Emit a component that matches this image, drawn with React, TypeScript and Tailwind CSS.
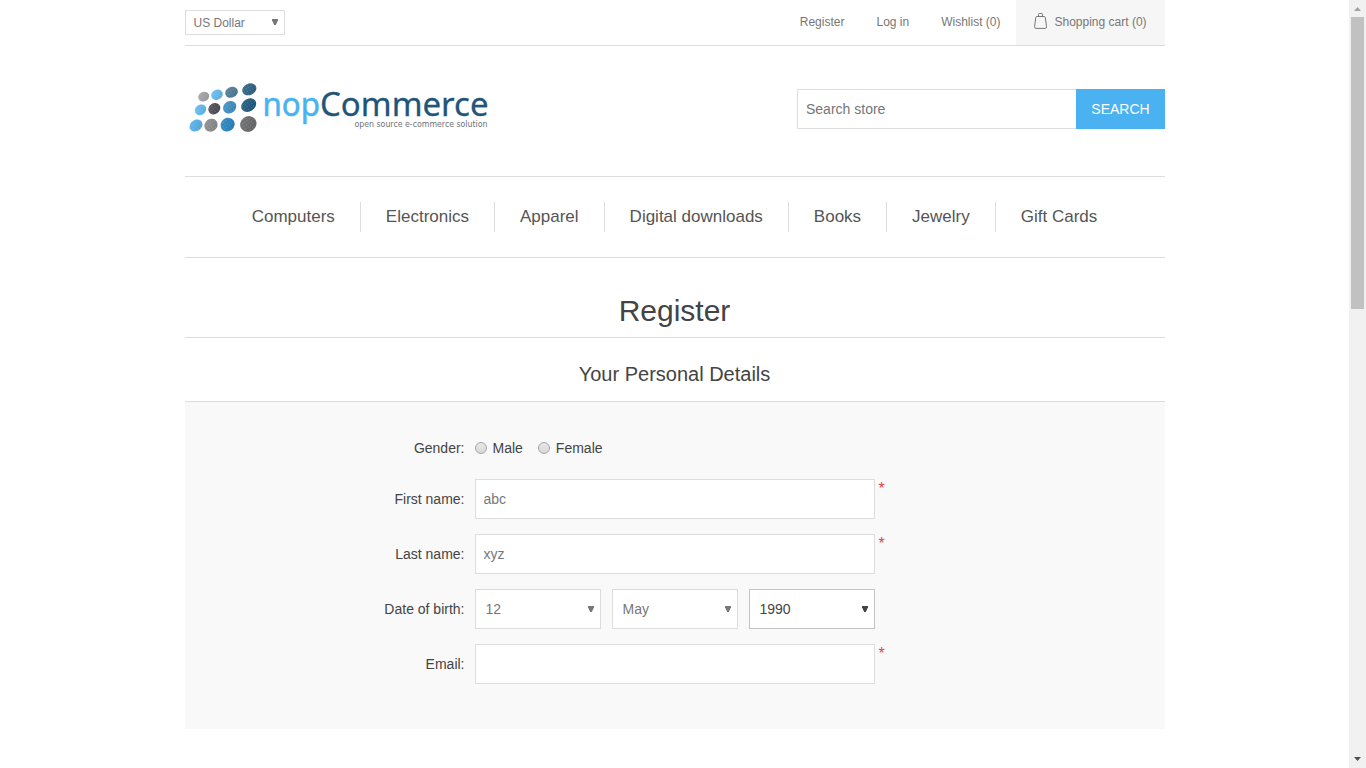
import type { ReactNode } from "react";

const dots: [number, number, number, number, string][] = [
  [18.7, 16.6, 5.6, 4.7, "#a3a3a8"],
  [32, 14.7, 6, 5, "#62bdf5"],
  [46.5, 12.3, 6.5, 5.3, "#4d7c99"],
  [64.3, 9.3, 7.3, 5.7, "#2b6285"],
  [15.5, 29.8, 6, 5.1, "#62bdf5"],
  [29.3, 28.7, 6.3, 5.4, "#4b4d53"],
  [44.7, 27.2, 7, 5.9, "#3a8fc7"],
  [63.7, 25.2, 8, 6.2, "#1b587f"],
  [11, 45.6, 6.9, 5.5, "#53b2f0"],
  [26, 45.2, 6.9, 6.2, "#8b8b8d"],
  [42.6, 44.7, 7.3, 6.6, "#2585c3"],
  [63.3, 44, 8.4, 7.7, "#68696b"],
];

function Logo() {
  return (
    <svg width="310" height="64" viewBox="0 0 310 64" className="overflow-visible" aria-label="nopCommerce">
      <defs>
        <linearGradient id="shine" x1="0" y1="0" x2="1" y2="1">
          <stop offset="0" stopColor="#fff" stopOpacity="0.1" />
          <stop offset="1" stopColor="#000" stopOpacity="0.12" />
        </linearGradient>
        <pattern id="grain" width="3" height="3" patternUnits="userSpaceOnUse">
          <rect width="1" height="1" x="1" y="1" fill="#fff" opacity="0.2" />
        </pattern>
      </defs>
      {dots.map(([x, y, rx, ry, fill], i) => (
        <g key={i} transform={`rotate(${i < 4 ? -25 : -35} ${x} ${y})`}>
          <ellipse cx={x} cy={y} rx={rx} ry={ry} fill={fill} />
          <ellipse cx={x} cy={y} rx={rx} ry={ry} fill="url(#shine)" />
          <ellipse cx={x} cy={y} rx={rx} ry={ry} fill="url(#grain)" />
        </g>
      ))}
      <g fontFamily="'Noto Sans', sans-serif">
        <text x="77.5" y="36.3" fontSize="33.5" fill="#4ab2f1" stroke="#4ab2f1" strokeWidth="0.5" textLength="57.5" lengthAdjust="spacingAndGlyphs">nop</text>
        <text x="135" y="36.3" fontSize="33.5" fill="#1f5578" stroke="#1f5578" strokeWidth="0.3" textLength="168.5" lengthAdjust="spacingAndGlyphs">Commerce</text>
      </g>
      <text x="169.5" y="46.5" fontFamily="'DejaVu Sans', sans-serif" fontSize="8" fill="#6b7278" textLength="133" lengthAdjust="spacingAndGlyphs">open source e-commerce solution</text>
    </svg>
  );
}

function Arrow() {
  return (
    <svg width="6" height="6" viewBox="0 0 6 6" fill="currentColor" className="mt-[-1px] shrink-0">
      <path d="M0 0H6V1.2L3.8 6H2.2L0 1.2Z" />
    </svg>
  );
}

function Bag() {
  return (
    <svg width="14" height="17" viewBox="0 0 14 17" fill="none" stroke="#777" strokeWidth="1">
      <path d="M3 4.5H10Q11 4.5 11.3 5.5L12.5 14.5Q12.7 16.4 11.2 16.4H1.9Q0.4 16.4 0.6 14.5L1.8 5.5Q2 4.5 3 4.5ZM4.5 4.5V2.3Q4.5 1.5 5.3 1.5H7.7Q8.5 1.5 8.5 2.3V4.5" />
    </svg>
  );
}

function Radio() {
  return <span className="size-3 rounded-full border border-[#a5a5a5] bg-gradient-to-b from-[#e8e8e8] to-[#d8d8d8]" />;
}

function Row({ label, required, children }: { label: string; required?: boolean; children: ReactNode }) {
  return (
    <div className="flex h-10">
      <label className="mr-[10px] w-[280px] pt-px text-right leading-[39px]">{label}</label>
      {children}
      {required && <span className="ml-1 text-base leading-[19px] text-[#e4434b]">*</span>}
    </div>
  );
}

function Field({ value = "" }: { value?: string }) {
  return (
    <input
      defaultValue={value}
      className="h-10 w-[400px] border border-[#ddd] bg-white px-2 text-sm text-[#777] outline-none"
    />
  );
}

function DateSelect({ value, active }: { value: string; active?: boolean }) {
  return (
    <div
      className={`flex h-10 w-[126px] items-center justify-between border bg-white pr-[6px] pl-[10px] ${
        active ? "border-[#c4c4c4] text-[#444]" : "border-[#ddd] text-[#777]"
      }`}
    >
      <span>{value}</span>
      <Arrow />
    </div>
  );
}

const categories = ["Computers", "Electronics", "Apparel", "Digital downloads", "Books", "Jewelry", "Gift Cards"];

export default function App() {
  return (
    <div className="flex h-screen overflow-hidden bg-white font-['Liberation_Sans',Arial,sans-serif] text-sm text-[#444]">
      <div className="min-w-0 flex-1">
        <div className="mx-auto w-[980px]">
          <header>
            <div className="flex h-[46px] justify-between border-b border-[#ddd] text-xs text-[#777]">
              <div className="mt-[10px] flex h-[25px] w-[100px] items-center justify-between border border-[#ddd] pr-[6px] pl-2">
                <span>US Dollar</span>
                <Arrow />
              </div>
              <nav className="flex leading-[44px]">
                <a className="mr-8">Register</a>
                <a className="mr-8">Log in</a>
                <a className="mr-[15px]">Wishlist (0)</a>
                <a className="flex w-[149px] bg-[#f6f6f6] pl-[18.5px]">
                  <span className="mt-3 mr-[6.5px] h-[17px]"><Bag /></span>
                  Shopping cart (0)
                </a>
              </nav>
            </div>
            <div className="flex h-[130px] items-start justify-between">
              <a className="mt-[34px] ml-[0.5px]"><Logo /></a>
              <div className="mt-[43px] flex h-10">
                <input
                  placeholder="Search store"
                  className="w-[279px] border border-r-0 border-[#ddd] px-[8.5px] text-sm outline-none placeholder:text-[#757575]"
                />
                <button className="w-[89px] bg-[#4ab2f1] pl-px text-sm text-white">SEARCH</button>
              </div>
            </div>
          </header>
          <nav className="flex h-[82px] justify-center border-y border-[#ddd] pt-[25px] text-[17px] leading-[30px] text-[#555]">
            {categories.map((name, i) => (
              <a key={name} className={`h-[30px] px-[25px] ${i ? "border-l border-[#ddd]" : ""}`}>
                {name}
              </a>
            ))}
          </nav>
          <main>
            <h1 className="h-20 border-b border-[#ddd] pt-[35px] text-center text-[30px] leading-[36px]">Register</h1>
            <h2 className="h-[63px] pt-[24px] text-center text-xl leading-6">Your Personal Details</h2>
            <section className="flex h-[328px] flex-col gap-[15px] border-t border-[#ddd] bg-[#f9f9f9] pt-[37px]">
              <div className="-mb-px flex h-[26px] items-center">
                <span className="mt-[-9px] mr-[10px] w-[280px] text-right">Gender:</span>
                <div className="mt-[-9px] flex items-center">
                  <Radio />
                  <span className="mr-[15px] ml-[6px]">Male</span>
                  <Radio />
                  <span className="ml-[6px]">Female</span>
                </div>
              </div>
              <Row label="First name:" required><Field value="abc" /></Row>
              <Row label="Last name:" required><Field value="xyz" /></Row>
              <Row label="Date of birth:">
                <div className="flex gap-[11px]">
                  <DateSelect value="12" />
                  <DateSelect value="May" />
                  <DateSelect value="1990" active />
                </div>
              </Row>
              <Row label="Email:" required><Field /></Row>
            </section>
          </main>
        </div>
      </div>
      <div className="flex w-[17px] flex-col items-center bg-[#f1f1f1]">
        <svg width="17" height="17" viewBox="0 0 17 17"><path d="M5 11L8.5 7L12 11Z" fill="#a3a3a3" /></svg>
        <div className="h-[292px] w-[13px] bg-[#c1c1c1]" />
        <svg width="17" height="17" viewBox="0 0 17 17" className="mt-auto"><path d="M5 6L8.5 10L12 6Z" fill="#505050" /></svg>
      </div>
    </div>
  );
}
